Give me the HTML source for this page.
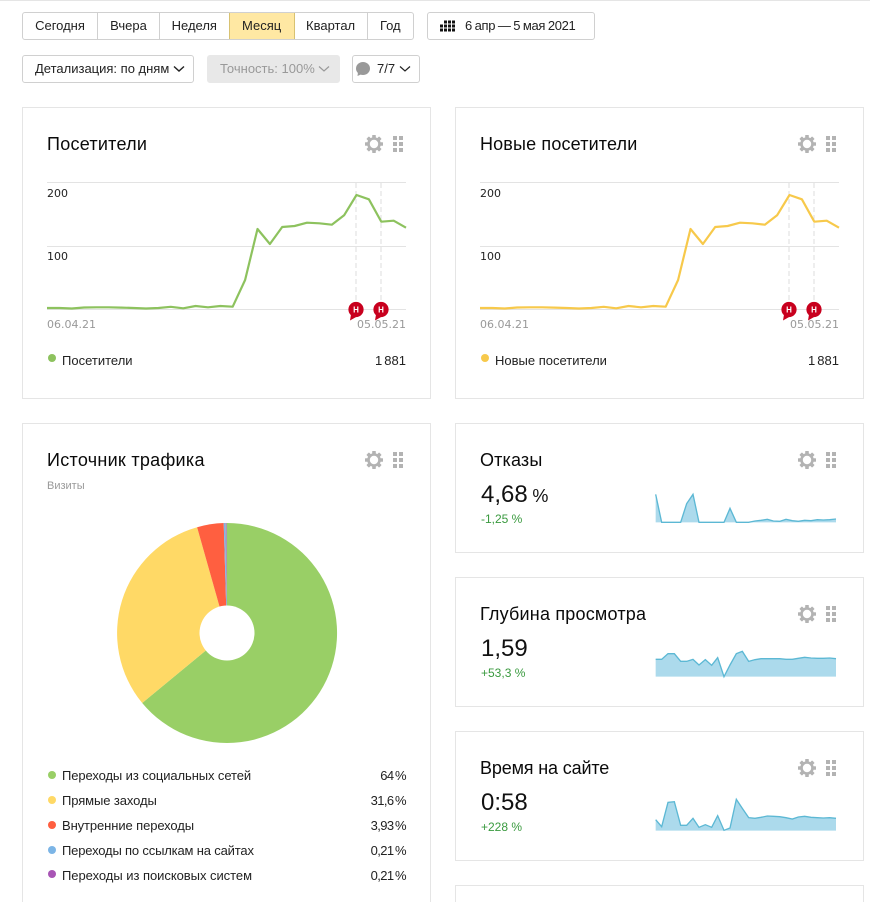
<!DOCTYPE html>
<html lang="ru"><head><meta charset="utf-8"><title>Метрика</title>
<style>
html,body{margin:0;padding:0;background:#fff;width:870px;height:902px;overflow:hidden}
body{font-family:"Liberation Sans",Arial,sans-serif;color:#000}
#w{position:relative;width:870px;height:902px;overflow:hidden}
.a{position:absolute;box-sizing:border-box}
.t{position:absolute;white-space:nowrap;line-height:16px;height:16px}
.card{position:absolute;box-sizing:border-box;border:1px solid #e5e5e5;background:#fff}
.title{font-size:18px;letter-spacing:.15px;line-height:22px;height:22px;position:absolute;white-space:nowrap;color:#0a0a0a}
.tabs{position:absolute;left:22px;top:12px;width:392px;height:28px;border:1px solid #d0d0d0;border-radius:3px;box-sizing:border-box;display:flex;font-size:13px;line-height:26px;text-align:center;overflow:hidden;color:#222}
.tabs div{box-sizing:border-box;border-right:1px solid #d0d0d0}
.tabs div:last-child{border-right:0}
.tabs .on{background:#ffe8a3;border-right:1px solid #d8c272}
.btn{position:absolute;box-sizing:border-box;height:28px;border:1px solid #d0d0d0;border-radius:3px;font-size:13px;line-height:26px;white-space:nowrap;color:#222}
.ax{font-family:"DejaVu Sans",sans-serif;font-size:11px;color:#222}
.dt{font-family:"DejaVu Sans",sans-serif;font-size:11px;color:#999}
.lg{font-size:13px;color:#222}
.nr{letter-spacing:-.1px}
.pc{word-spacing:-1.5px;letter-spacing:-.6px}
.nm{word-spacing:-1.5px}
.dot{position:absolute;width:8px;height:8px;border-radius:50%}
.val{position:absolute;white-space:nowrap;font-size:24px;line-height:28px;color:#111;word-spacing:-2px}
.val span{font-size:18px}
.chg{position:absolute;white-space:nowrap;font-size:12px;line-height:14px;color:#3a9a3f}
svg{position:absolute;left:0;top:0;overflow:visible}
</style></head>
<body>
<div id="w">
<div class="a" style="left:0;top:0;width:870px;height:1px;background:#e5e5e5"></div>

<div class="tabs">
<div style="width:75px">Сегодня</div><div style="width:62px">Вчера</div><div style="width:69.6px;border-right-color:#d8c272">Неделя</div><div class="on" style="width:65px">Месяц</div><div style="width:73px">Квартал</div><div style="flex:1">Год</div>
</div>
<div class="btn" style="left:427px;top:12px;width:168px;padding-left:37px;word-spacing:-.5px;letter-spacing:-.35px">6 апр — 5 мая 2021</div>
<div class="btn" style="left:22px;top:55px;width:172px;padding-left:12px">Детализация: по дням</div>
<div class="btn" style="left:207px;top:55px;width:133px;padding-left:12px;background:#e8e8e8;border-color:#e8e8e8;color:#999">Точность: 100%</div>
<div class="btn" style="left:352px;top:55px;width:68px;padding-left:24px">7/7</div>

<div class="card" style="left:22px;top:107px;width:409px;height:292px"></div>
<div class="card" style="left:455px;top:107px;width:409px;height:292px"></div>
<div class="card" style="left:22px;top:423px;width:409px;height:500px"></div>
<div class="card" style="left:455px;top:423px;width:409px;height:130px"></div>
<div class="card" style="left:455px;top:577px;width:409px;height:130px"></div>
<div class="card" style="left:455px;top:731px;width:409px;height:130px"></div>
<div class="card" style="left:455px;top:885px;width:409px;height:60px"></div>

<div class="title" style="left:47px;top:133px;letter-spacing:.25px">Посетители</div>
<div class="title" style="left:480px;top:133px">Новые посетители</div>
<div class="title" style="left:47px;top:449px;letter-spacing:.28px">Источник трафика</div>
<div class="t" style="left:47px;top:478px;font-size:11px;color:#999">Визиты</div>
<div class="title" style="left:480px;top:449px">Отказы</div>
<div class="title" style="left:480px;top:603px;letter-spacing:.2px">Глубина просмотра</div>
<div class="title" style="left:480px;top:757px;letter-spacing:-.15px">Время на сайте</div>

<div class="val" style="left:481px;top:481px">4,68 <span>%</span></div><div class="chg" style="left:481px;top:512px">-1,25 %</div>
<div class="val" style="left:481px;top:635px">1,59</div><div class="chg" style="left:481px;top:666px">+53,3 %</div>
<div class="val" style="left:481px;top:789px">0:58</div><div class="chg" style="left:481px;top:820px">+228 %</div>

<svg width="870" height="902" viewBox="0 0 870 902">
<defs>
<g id="gear"><g fill="#b3b3b3"><rect x="-1.8" y="-9" width="3.6" height="18" rx=".6"/><rect x="-1.8" y="-9" width="3.6" height="18" rx=".6" transform="rotate(45)"/><rect x="-1.8" y="-9" width="3.6" height="18" rx=".6" transform="rotate(90)"/><rect x="-1.8" y="-9" width="3.6" height="18" rx=".6" transform="rotate(135)"/></g><circle r="6.8" fill="#b3b3b3"/><circle r="4.2" fill="#fff"/></g>
<g id="grip" fill="#b3b3b3"><rect x="0" y="0" width="4" height="4"/><rect x="6" y="0" width="4" height="4"/><rect x="0" y="6" width="4" height="4"/><rect x="6" y="6" width="4" height="4"/><rect x="0" y="12" width="4" height="4"/><rect x="6" y="12" width="4" height="4"/></g>
<g id="grid" stroke="#e3e3e3" fill="none"><path d="M47 182.5H406M47 246.5H406M47 309.5H406"/><path d="M356 183V302M381 183V302" stroke="#ddd" stroke-dasharray="5 3"/></g>
<g id="pin"><path d="M-5 5L-6 11L1 7Z" fill="#c8001e"/><circle r="7.6" fill="#c8001e"/></g>
<polyline id="ln" fill="none" stroke-width="2.2" stroke-linejoin="round" points="47,308 59.4,308 71.8,308.5 84.1,307.5 96.5,307.3 108.9,307.3 121.3,307.6 133.7,308 146,308.5 158.4,308 170.8,306.8 183.2,308.3 195.6,306 208,307.3 220.3,306 232.7,306.7 245.1,280 257.5,229 269.9,244 282.2,227 294.6,226 307,222.7 319.4,223.3 331.8,224.7 344.1,215.3 356.5,195 368.9,199.3 381.3,221.7 393.7,220.7 406,227.7"/>
</defs>
<use href="#gear" x="374" y="144"/><use href="#grip" x="393" y="136"/>
<use href="#gear" x="807" y="144"/><use href="#grip" x="826" y="136"/>
<use href="#gear" x="374" y="460"/><use href="#grip" x="393" y="452"/>
<use href="#gear" x="807" y="460"/><use href="#grip" x="826" y="452"/>
<use href="#gear" x="807" y="614"/><use href="#grip" x="826" y="606"/>
<use href="#gear" x="807" y="768"/><use href="#grip" x="826" y="760"/>

<use href="#grid"/><use href="#grid" x="433"/>
<use href="#ln" stroke="#8dc25e"/>
<use href="#ln" x="433" stroke="#f7c94b"/>
<use href="#pin" x="356" y="309.5"/><use href="#pin" x="381" y="309.5"/>
<use href="#pin" x="789" y="309.5"/><use href="#pin" x="814" y="309.5"/>
<g font-family="'Liberation Sans',sans-serif" font-size="8" font-weight="700" fill="#fff" text-anchor="middle"><text x="356" y="312.5">Н</text><text x="381" y="312.5">Н</text><text x="789" y="312.5">Н</text><text x="814" y="312.5">Н</text></g>

<!-- top icons -->
<g fill="#111"><rect x="444" y="20.5" width="3" height="3"/><rect x="448" y="20.5" width="3" height="3"/><rect x="452" y="20.5" width="3" height="3"/><rect x="440" y="24.5" width="3" height="3"/><rect x="444" y="24.5" width="3" height="3"/><rect x="448" y="24.5" width="3" height="3"/><rect x="452" y="24.5" width="3" height="3"/><rect x="440" y="28.5" width="3" height="3"/><rect x="444" y="28.5" width="3" height="3"/><rect x="448" y="28.5" width="3" height="3"/><rect x="452" y="28.5" width="3" height="3"/></g>
<path d="M174 66.5L179 71L184 66.5" fill="none" stroke="#222" stroke-width="1.4"/>
<path d="M319 66.5L324 71L329 66.5" fill="none" stroke="#999" stroke-width="1.2"/>
<path d="M400 66.5L405 71L410 66.5" fill="none" stroke="#222" stroke-width="1.2"/>
<ellipse cx="363" cy="68.5" rx="7" ry="6.5" fill="#999"/><path d="M358 72L357.5 76L362 74Z" fill="#999"/>

<!-- pie -->
<path d="M227 633V523A110 110 0 1 1 142.2 703Z" fill="#99cf66"/>
<path d="M227 633L142.2 703A110 110 0 0 1 197.1 527.2Z" fill="#ffd966"/>
<path d="M227 633L197.1 527.2A110 110 0 0 1 223.7 523Z" fill="#ff5f40"/>
<path d="M227 633L223.7 523A110 110 0 0 1 225.2 523Z" fill="#7cb5e6"/>
<path d="M227 633L225.2 523A110 110 0 0 1 227 523Z" fill="#a89bb8"/>
<circle cx="227" cy="633" r="27.5" fill="#fff"/>

<!-- sparklines -->
<g transform="translate(640 425) scale(.33333)"><polygon fill="#acdaec" points="47,292 47,208 65,292 122,292 140,236 159,208 177,292 252,292 270,250 289,292 326,292 345,288 363,286 382,283 400,288 419,289 438,283 457,287 475,289 494,286 513,287 532,284 550,285 569,284 588,282 588,292"/><polyline fill="none" stroke="#5cb8d4" stroke-width="4" points="47,208 65,292 122,292 140,236 159,208 177,292 252,292 270,250 289,292 326,292 345,288 363,286 382,283 400,288 419,289 438,283 457,287 475,289 494,286 513,287 532,284 550,285 569,284 588,282"/></g>
<g transform="translate(640 600) scale(.33333)"><polygon fill="#acdaec" points="47,230 47,178 65,178 84,161 103,161 122,184 140,184 159,178 177,195 196,179 215,196 233,173 252,230 270,195 289,161 307,154 326,184 345,179 363,176 382,176 400,176 419,176 438,178 457,178 475,175 494,172 513,174 532,175 550,175 569,174 588,176 588,230"/><polyline fill="none" stroke="#5cb8d4" stroke-width="4" points="47,178 65,178 84,161 103,161 122,184 140,184 159,178 177,195 196,179 215,196 233,173 252,230 270,195 289,161 307,154 326,184 345,179 363,176 382,176 400,176 419,176 438,178 457,178 475,175 494,172 513,174 532,175 550,175 569,174 588,176"/></g>
<g transform="translate(640 750) scale(.33333)"><polygon fill="#acdaec" points="47,242 47,209 65,230 84,157 103,155 122,226 140,226 159,205 177,232 196,224 215,232 233,197 252,241 270,234 289,148 307,175 326,203 345,205 363,202 382,198 400,199 419,200 438,203 457,207 475,201 494,199 513,202 532,203 550,204 569,203 588,205 588,242"/><polyline fill="none" stroke="#5cb8d4" stroke-width="4" points="47,209 65,230 84,157 103,155 122,226 140,226 159,205 177,232 196,224 215,232 233,197 252,241 270,234 289,148 307,175 326,203 345,205 363,202 382,198 400,199 419,200 438,203 457,207 475,201 494,199 513,202 532,203 550,204 569,203 588,205"/></g>
</svg>

<div class="t ax" style="left:47px;top:186px">200</div><div class="t ax" style="left:47px;top:249px">100</div>
<div class="t ax" style="left:480px;top:186px">200</div><div class="t ax" style="left:480px;top:249px">100</div>
<div class="t dt" style="left:47px;top:317px">06.04.21</div><div class="t dt" style="right:464px;top:317px">05.05.21</div>
<div class="t dt" style="left:480px;top:317px">06.04.21</div><div class="t dt" style="right:31px;top:317px">05.05.21</div>

<div class="dot" style="left:48px;top:354px;background:#8dc25e"></div><div class="t lg" style="left:62px;top:353px">Посетители</div><div class="t lg nm" style="right:464px;top:353px">1 881</div>
<div class="dot" style="left:481px;top:354px;background:#f7c94b"></div><div class="t lg" style="left:495px;top:353px">Новые посетители</div><div class="t lg nm" style="right:31px;top:353px">1 881</div>

<div class="dot" style="left:48px;top:771px;background:#99cf66"></div><div class="t lg nr" style="left:62px;top:768px">Переходы из социальных сетей</div><div class="t lg pc" style="right:464px;top:768px">64 %</div>
<div class="dot" style="left:48px;top:796px;background:#ffd966"></div><div class="t lg nr" style="left:62px;top:793px">Прямые заходы</div><div class="t lg pc" style="right:464px;top:793px">31,6 %</div>
<div class="dot" style="left:48px;top:821px;background:#ff5f40"></div><div class="t lg nr" style="left:62px;top:818px">Внутренние переходы</div><div class="t lg pc" style="right:464px;top:818px">3,93 %</div>
<div class="dot" style="left:48px;top:846px;background:#7cb5e6"></div><div class="t lg nr" style="left:62px;top:843px;letter-spacing:-.17px">Переходы по ссылкам на сайтах</div><div class="t lg pc" style="right:464px;top:843px">0,21 %</div>
<div class="dot" style="left:48px;top:870px;background:#a855b5"></div><div class="t lg" style="left:62px;top:868px;letter-spacing:-.04px">Переходы из поисковых систем</div><div class="t lg pc" style="right:464px;top:868px">0,21 %</div>
</div>
</body></html>
